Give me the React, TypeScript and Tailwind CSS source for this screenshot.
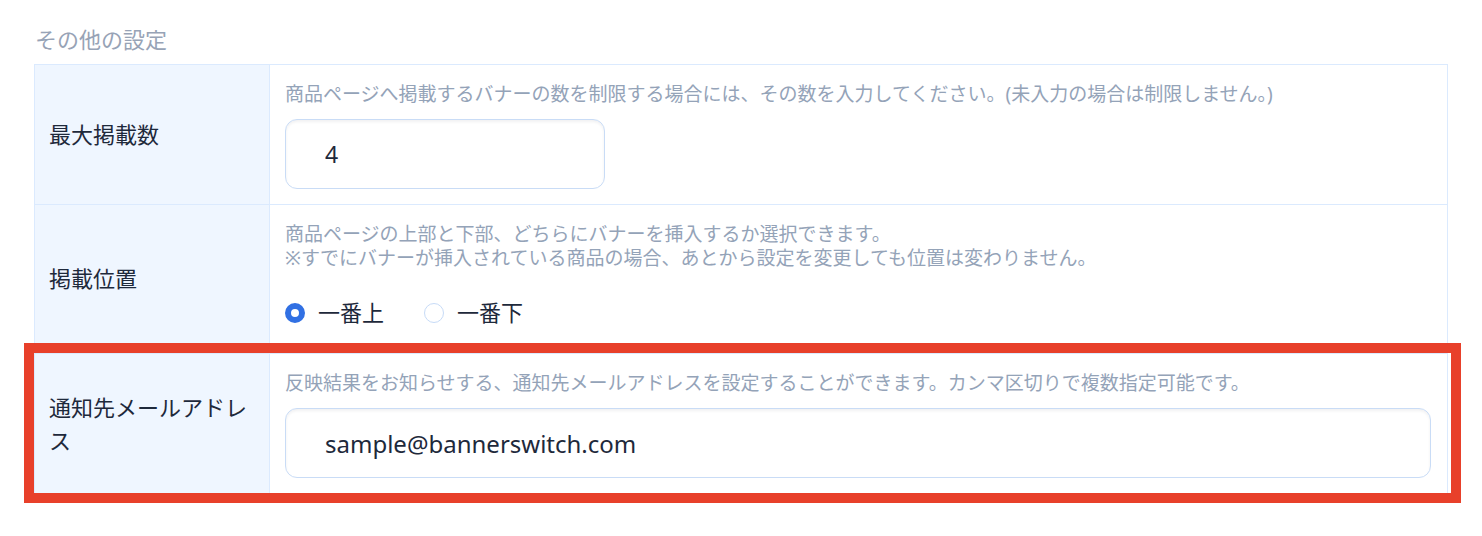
import { useState } from 'react'

const font = { fontFamily: '"Noto Sans", "Noto Sans CJK JP", sans-serif' }

function Row({
  label,
  children,
  last,
}: {
  label: string
  children: React.ReactNode
  last?: boolean
}) {
  return (
    <div className={`grid grid-cols-[235px_1fr] ${last ? '' : 'border-b border-[#dbeafe]'}`}>
      <div className="flex items-center border-r border-[#dbeafe] bg-[#eff6ff] px-[14px] text-[22px] leading-[33px] text-[#1e293b]">
        {label}
      </div>
      <div className="pl-[15px] pr-[16px] pt-[17px] pb-[15px]">{children}</div>
    </div>
  )
}

function Hint({ children }: { children: React.ReactNode }) {
  return <p className="text-[19px] leading-[24px] text-[#94a3b8]">{children}</p>
}

function Radio({ checked, label, onClick }: { checked: boolean; label: string; onClick: () => void }) {
  return (
    <button type="button" onClick={onClick} className="flex items-center gap-[13px]">
      <span
        className={`h-[20px] w-[20px] rounded-full ${
          checked ? 'border-[6px] border-[#3170e3] bg-white' : 'border border-[#c7dbf7] bg-white'
        }`}
      />
      <span className="text-[22px] leading-[33px] text-[#1e293b]">{label}</span>
    </button>
  )
}

export default function App() {
  const [pos, setPos] = useState<'top' | 'bottom'>('top')
  const [max, setMax] = useState('4')
  const [mail, setMail] = useState('sample@bannerswitch.com')

  return (
    <div className="min-h-screen bg-white px-[34px] pt-[23px]" style={font}>
      <h2 className="mb-[8px] pl-px text-[22px] leading-[33px] text-[#97a3b6]">その他の設定</h2>

      <div className="border border-[#dbeafe]">
        <Row label="最大掲載数">
          <Hint>商品ページへ掲載するバナーの数を制限する場合には、その数を入力してください。(未入力の場合は制限しません。)</Hint>
          <input
            value={max}
            onChange={(e) => setMax(e.target.value)}
            className="mt-[13px] h-[70px] w-[320px] rounded-[12px] border border-[#c9dcf6] pl-[39px] text-[23px] text-[#1e293b] shadow-[inset_0_2px_3px_rgba(15,23,42,0.06)] outline-none"
          />
        </Row>

        <Row label="掲載位置">
          <Hint>
            商品ページの上部と下部、どちらにバナーを挿入するか選択できます。
            <br />
            ※すでにバナーが挿入されている商品の場合、あとから設定を変更しても位置は変わりません。
          </Hint>
          <div className="mt-[26px] mb-[8px] flex items-center gap-[40px]">
            <Radio checked={pos === 'top'} label="一番上" onClick={() => setPos('top')} />
            <Radio checked={pos === 'bottom'} label="一番下" onClick={() => setPos('bottom')} />
          </div>
        </Row>

        <div className="relative border-t border-[#dbeafe]">
          <Row label="通知先メールアドレス" last>
            <Hint>反映結果をお知らせする、通知先メールアドレスを設定することができます。カンマ区切りで複数指定可能です。</Hint>
            <input
              value={mail}
              onChange={(e) => setMail(e.target.value)}
              className="mt-[13px] h-[70px] w-full rounded-[12px] border border-[#c9dcf6] pl-[39px] text-[24px] text-[#1e293b] shadow-[inset_0_2px_3px_rgba(15,23,42,0.06)] outline-none"
            />
          </Row>
          <div className="pointer-events-none absolute -top-[11px] -bottom-[10px] -left-[11px] -right-[14px] border-[10px] border-[#e8402a]" />
        </div>
      </div>
    </div>
  )
}
